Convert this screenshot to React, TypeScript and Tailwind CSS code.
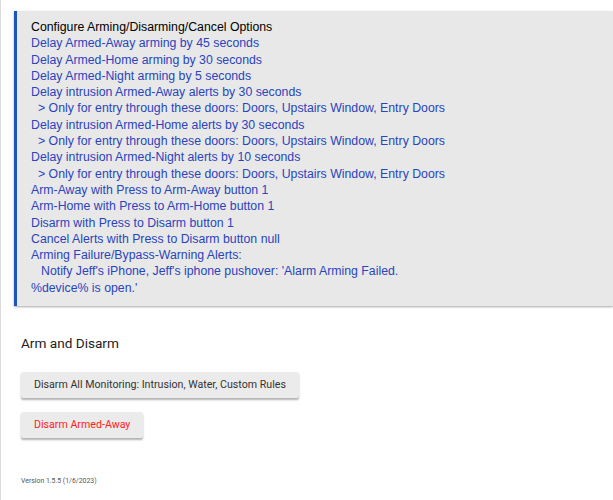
export default function App() {
  const blue = "text-[#2a44bd]";
  const lines: { t: string; indent?: boolean }[] = [
    { t: "Delay Armed-Away arming by 45 seconds" },
    { t: "Delay Armed-Home arming by 30 seconds" },
    { t: "Delay Armed-Night arming by 5 seconds" },
    { t: "Delay intrusion Armed-Away alerts by 30 seconds" },
    { t: "> Only for entry through these doors: Doors, Upstairs Window, Entry Doors", indent: true },
    { t: "Delay intrusion Armed-Home alerts by 30 seconds" },
    { t: "> Only for entry through these doors: Doors, Upstairs Window, Entry Doors", indent: true },
    { t: "Delay intrusion Armed-Night alerts by 10 seconds" },
    { t: "> Only for entry through these doors: Doors, Upstairs Window, Entry Doors", indent: true },
    { t: "Arm-Away with Press to Arm-Away button 1" },
    { t: "Arm-Home with Press to Arm-Home button 1" },
    { t: "Disarm with Press to Disarm button 1" },
    { t: "Cancel Alerts with Press to Disarm button null" },
    { t: "Arming Failure/Bypass-Warning Alerts:" },
  ];
  return (
    <div className="w-[613px] h-[500px] bg-white overflow-hidden border-l border-[#dcdcdc] relative">
      <div className="pt-[11px] pl-[13px]">
        <div className="bg-[#e8e8e8] border-l-[3px] border-[#1e56b8] shadow-[0_1px_2px_rgba(0,0,0,0.35)] pt-[8px] pb-[10px] pl-[14px] font-['Liberation_Sans',Arial,sans-serif] text-[12.3px] leading-[16.3px]">
          <div className="text-black">Configure Arming/Disarming/Cancel Options</div>
          {lines.map((l, i) => (
            <div key={i} className={`${blue} ${l.indent ? "pl-[7px]" : ""} whitespace-pre`}>
              {l.t}
            </div>
          ))}
          <div className={`${blue} pl-[10px] whitespace-pre`}>
            Notify Jeff's iPhone, Jeff's iphone pushover: 'Alarm Arming Failed.
          </div>
          <div className={blue}>%device% is open.'</div>
        </div>
      </div>
      <div className="pl-[20px] font-['Roboto',sans-serif]">
        <div className="mt-[28px] text-[13.6px] leading-[18px] text-[#222]">Arm and Disarm</div>
        <div className="mt-[20px] flex flex-col items-start gap-[14px]">
          <button className="h-[26px] px-[13px] bg-[#ebebeb] rounded-[2px] text-[10.65px] text-[#333] shadow-[0_2px_2px_rgba(0,0,0,0.3)]">
            Disarm All Monitoring: Intrusion, Water, Custom Rules
          </button>
          <button className="h-[26px] px-[13px] bg-[#ebebeb] rounded-[2px] text-[10.65px] text-[#ff2222] shadow-[0_2px_2px_rgba(0,0,0,0.3)]">
            Disarm Armed-Away
          </button>
        </div>
        <div className="mt-[38px] text-[6.9px] leading-[10px] text-[#555]">Version 1.5.5 (1/6/2023)</div>
      </div>
    </div>
  );
}
